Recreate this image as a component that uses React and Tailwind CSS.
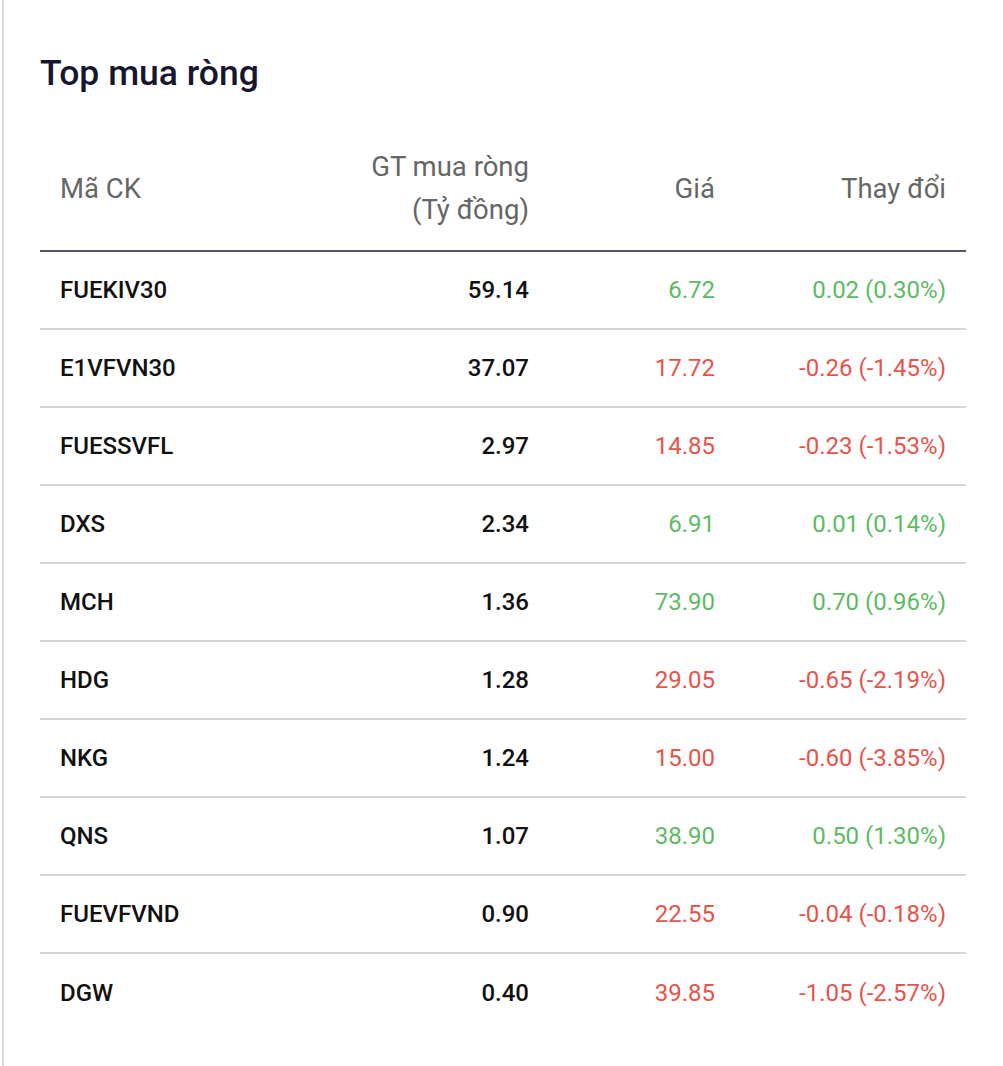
const ROWS = [
  { code: 'FUEKIV30', value: '59.14', price: '6.72', change: '0.02 (0.30%)', up: true },
  { code: 'E1VFVN30', value: '37.07', price: '17.72', change: '-0.26 (-1.45%)', up: false },
  { code: 'FUESSVFL', value: '2.97', price: '14.85', change: '-0.23 (-1.53%)', up: false },
  { code: 'DXS', value: '2.34', price: '6.91', change: '0.01 (0.14%)', up: true },
  { code: 'MCH', value: '1.36', price: '73.90', change: '0.70 (0.96%)', up: true },
  { code: 'HDG', value: '1.28', price: '29.05', change: '-0.65 (-2.19%)', up: false },
  { code: 'NKG', value: '1.24', price: '15.00', change: '-0.60 (-3.85%)', up: false },
  { code: 'QNS', value: '1.07', price: '38.90', change: '0.50 (1.30%)', up: true },
  { code: 'FUEVFVND', value: '0.90', price: '22.55', change: '-0.04 (-0.18%)', up: false },
  { code: 'DGW', value: '0.40', price: '39.85', change: '-1.05 (-2.57%)', up: false },
]

const gridCls = 'grid grid-cols-[300px_209px_186px_231px]'

export default function App() {
  return (
    <div className="min-h-[1066px] bg-white" style={{ fontFamily: 'Roboto, "Noto Sans", sans-serif' }}>
      <div className="ml-[2px] min-h-[1066px] border-l-2 border-[#d9d9de] pl-[36px] pt-[53px]">
        {/* Title */}
        <h2 className="text-[35.5px] leading-[40px] font-medium text-[#16162e]">Top mua ròng</h2>

        {/* Table */}
        <div className="mt-[52px] w-[926px]">
          <div className={`${gridCls} items-center border-b-2 border-[#55556a] pb-[19px] text-[27.5px] leading-[43px] text-[#666666]`}>
            <div className="px-5">Mã CK</div>
            <div className="px-5 text-right">
              GT mua ròng
              <br />
              (Tỷ đồng)
            </div>
            <div className="px-5 text-right">Giá</div>
            <div className="px-5 text-right">Thay đổi</div>
          </div>

          {ROWS.map((r, i) => (
            <div
              key={r.code}
              className={`${gridCls} h-[78px] items-center text-[24px] ${i < ROWS.length - 1 ? 'border-b-2 border-[#d4d4d9]' : ''}`}
            >
              <div className="px-5 font-medium text-[#111111]">{r.code}</div>
              <div className="px-5 text-right font-medium text-[#111111]">{r.value}</div>
              <div className={`px-5 text-right ${r.up ? 'text-[#5dbb63]' : 'text-[#e8534a]'}`}>{r.price}</div>
              <div className={`px-5 text-right ${r.up ? 'text-[#5dbb63]' : 'text-[#e8534a]'}`}>{r.change}</div>
            </div>
          ))}
        </div>
      </div>
    </div>
  )
}
